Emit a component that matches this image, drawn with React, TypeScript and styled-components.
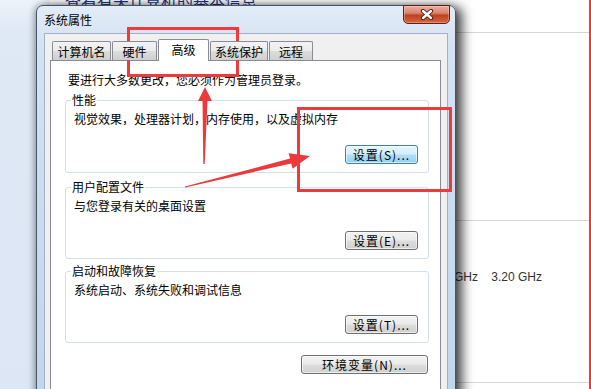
import styled, { createGlobalStyle } from 'styled-components';

const GlobalStyle = createGlobalStyle`
  html, body {
    margin: 0;
    padding: 0;
    background: #fff;
    overflow: hidden;
  }
  body {
    font-family: 'Noto Sans CJK SC', 'Noto Sans', sans-serif;
  }
  * {
    box-sizing: border-box;
  }
`;

const Screen = styled.div`
  position: relative;
  width: 591px;
  height: 389px;
  overflow: hidden;
  display: flex;
  background: #fff;
`;

/* ---- control panel behind the dialog ---- */

const Sidebar = styled.aside`
  width: 50px;
  flex-shrink: 0;
  background: linear-gradient(180deg, #eef3fa 0, #dfe8f5 30px, #dce6f4 100%);
`;

const Main = styled.main`
  flex: 1;
  min-width: 0;
  display: flex;
  flex-direction: column;
`;

const PageHeading = styled.h1`
  margin: -8px 0 0;
  height: 41px;
  padding-left: 15px;
  border-bottom: 1px solid #d6d6d6;
  font-size: 16px;
  line-height: 16px;
  font-weight: normal;
  color: #1e3287;
  white-space: nowrap;
`;

const Section = styled.section<{ $height: number }>`
  height: ${(p) => p.$height}px;
  border-bottom: 1px solid #d6d6d6;
`;

const SpecRow = styled.div`
  margin-top: 49px;
  display: flex;
  justify-content: flex-end;
  padding-right: 49px;
  white-space: nowrap;
  font-family: 'Liberation Sans', Arial, sans-serif;
  font-size: 12px;
  line-height: 14px;
  color: #333;
`;

/* ---- the dialog window ---- */

const Window = styled.div`
  position: absolute;
  left: 36px;
  top: 5px;
  width: 420px;
  height: 400px;
  display: flex;
  flex-direction: column;
  padding: 0 7px;
  border: 1px solid #46566a;
  border-radius: 7px 7px 0 0;
  background: linear-gradient(180deg, #e3ecf7 0, #d4e2f3 40px, #c0d5ee 100%);
  box-shadow: 6px 2px 12px rgba(0, 0, 0, 0.75), -2px 0 6px rgba(0, 0, 0, 0.25);
`;

const TitleBar = styled.div`
  height: 27px;
  display: flex;
  justify-content: space-between;
  align-items: flex-start;
`;

const Title = styled.span`
  font-size: 12px;
  line-height: 27px;
  color: #000;
`;

const CloseButton = styled.div`
  width: 47px;
  height: 19px;
  margin-top: -1px;
  margin-right: -2px;
  display: flex;
  align-items: center;
  justify-content: center;
  border: 1px solid #5a2218;
  border-radius: 0 0 5px 5px;
  background: linear-gradient(180deg, #eab0a2 0%, #d9826c 42%, #c2401f 55%, #d2683f 100%);
  box-shadow: inset 0 0 0 1px rgba(255, 220, 200, 0.35);
`;

const Body = styled.div`
  flex: 1;
  display: flex;
  flex-direction: column;
  padding: 5px 6px 0 5px;
  background: #f0f0f0;
  border: 1px solid #9fb1c8;
  border-bottom: none;
`;

const TabRow = styled.div`
  height: 21px;
  display: flex;
  align-items: flex-end;
  gap: 1px;
  padding-left: 2px;
  position: relative;
  z-index: 1;
`;

const Tab = styled.div<{ $width: number; $active?: boolean }>`
  width: ${(p) => p.$width}px;
  height: ${(p) => (p.$active ? 22 : 19)}px;
  margin-bottom: ${(p) => (p.$active ? -1 : 0)}px;
  display: flex;
  align-items: center;
  justify-content: center;
  padding-bottom: ${(p) => (p.$active ? 3 : 0)}px;
  border: 1px solid #898c95;
  border-bottom: none;
  border-radius: 2px 2px 0 0;
  background: ${(p) =>
    p.$active ? '#fff' : 'linear-gradient(180deg, #f3f3f3 0%, #ebebeb 50%, #dddddd 51%, #cfcfcf 100%)'};
  font-size: 12px;
  color: #000;
  white-space: nowrap;
`;

const Panel = styled.div`
  flex: 1;
  display: flex;
  flex-direction: column;
  align-items: stretch;
  padding: 12px 11px 0 14px;
  border: 1px solid #898c95;
  background: #fff;
`;

const Intro = styled.p`
  margin: 0 0 0 3px;
  font-size: 12px;
  line-height: 14px;
  color: #000;
`;

const Group = styled.fieldset<{ $gap: number }>`
  margin: ${(p) => p.$gap}px 0 0;
  padding: 0 10px 8px 8px;
  border: 1px solid #d5dfe5;
  border-radius: 3px;
  min-inline-size: auto;
`;

const Legend = styled.legend`
  margin-left: -3px;
  padding: 0 1px;
  font-size: 12px;
  line-height: 14px;
  color: #000;
`;

const GroupText = styled.p`
  margin: 4px 0 0;
  font-size: 12px;
  line-height: 16px;
  color: #000;
`;

const ButtonRow = styled.div<{ $gap: number }>`
  margin-top: ${(p) => p.$gap}px;
  display: flex;
  justify-content: flex-end;
`;

const Button = styled.button<{ $width: number; $focused?: boolean }>`
  width: ${(p) => p.$width}px;
  height: 19px;
  padding: 0;
  display: flex;
  align-items: center;
  justify-content: center;
  border: 1px solid ${(p) => (p.$focused ? '#3c7fb1' : '#707070')};
  border-radius: 3px;
  background: ${(p) =>
    p.$focused
      ? 'linear-gradient(180deg, #e6f5fd 0%, #d4eefc 48%, #b0dff8 52%, #93d0f0 100%)'
      : 'linear-gradient(180deg, #f2f2f2 0%, #ebebeb 48%, #dddddd 52%, #cfcfcf 100%)'};
  box-shadow: inset 0 0 0 1px rgba(255, 255, 255, 0.6);
  font-family: 'Noto Sans CJK SC', sans-serif;
  font-size: 12px;
  letter-spacing: 1px;
  color: #000;
`;

/* ---- red annotations drawn over the screenshot ---- */

const Marker = styled.div<{ $x: number; $y: number; $w: number; $h: number }>`
  position: absolute;
  left: ${(p) => p.$x}px;
  top: ${(p) => p.$y}px;
  width: ${(p) => p.$w}px;
  height: ${(p) => p.$h}px;
  border: 3px solid #ec3b3b;
  pointer-events: none;
`;

const EdgeLine = styled.div`
  position: absolute;
  left: 589px;
  top: 0;
  width: 2px;
  height: 100%;
  background: #f03a3a;
`;

const Arrows = styled.svg`
  position: absolute;
  left: 0;
  top: 0;
  pointer-events: none;
`;

function CloseGlyph() {
  return (
    <svg width="14" height="11" viewBox="0 0 14 11">
      <path d="M3 2 L11 9 M11 2 L3 9" stroke="#4a1a10" strokeWidth="4.2" strokeLinecap="round" />
      <path d="M3 2 L11 9 M11 2 L3 9" stroke="#fff" strokeWidth="2.4" strokeLinecap="round" />
    </svg>
  );
}

const tabs = [
  { label: '计算机名', width: 59 },
  { label: '硬件', width: 45 },
  { label: '高级', width: 51, active: true },
  { label: '系统保护', width: 58 },
  { label: '远程', width: 44 },
];

const groups = [
  { title: '性能', text: '视觉效果，处理器计划，内存使用，以及虚拟内存', button: '设置(S)...', focused: true, gap: 6, inner: 18 },
  { title: '用户配置文件', text: '与您登录有关的桌面设置', button: '设置(E)...', gap: 7, inner: 17 },
  { title: '启动和故障恢复', text: '系统启动、系统失败和调试信息', button: '设置(T)...', gap: 5, inner: 17 },
];

export default function App() {
  return (
    <Screen>
      <GlobalStyle />
      <Sidebar />
      <Main>
        <PageHeading>查看有关计算机的基本信息</PageHeading>
        <Section $height={188} />
        <SpecRow>Intel(R) Core(TM) i5-3470 CPU @ 3.20GHz&nbsp;&nbsp;&nbsp;&nbsp;3.20 GHz</SpecRow>
        <Section $height={99} />
      </Main>

      <Window>
        <TitleBar>
          <Title>系统属性</Title>
          <CloseButton>
            <CloseGlyph />
          </CloseButton>
        </TitleBar>
        <Body>
          <TabRow>
            {tabs.map((t) => (
              <Tab key={t.label} $width={t.width} $active={t.active}>
                {t.label}
              </Tab>
            ))}
          </TabRow>
          <Panel>
            <Intro>要进行大多数更改，您必须作为管理员登录。</Intro>
            {groups.map((g) => (
              <Group key={g.title} $gap={g.gap}>
                <Legend>{g.title}</Legend>
                <GroupText>{g.text}</GroupText>
                <ButtonRow $gap={g.inner}>
                  <Button $width={73} $focused={g.focused}>
                    {g.button}
                  </Button>
                </ButtonRow>
              </Group>
            ))}
            <ButtonRow $gap={12}>
              <Button $width={127} style={{ marginRight: 1 }}>
                环境变量(N)...
              </Button>
            </ButtonRow>
          </Panel>
        </Body>
      </Window>

      <Marker $x={127} $y={27} $w={112} $h={50} />
      <Marker $x={297} $y={107} $w={155} $h={85} />
      <EdgeLine />
      <Arrows width="591" height="389" viewBox="0 0 591 389">
        <polygon
          points="203.3,164 202.5,101 198,101 205,87 212,101 207.5,101 204.7,164"
          fill="#ea3a3b"
        />
        <polygon
          points="184.9,186.5 290,158.6 288.6,153.2 310,156 292.6,168.7 291.2,163.4 185.1,187.5"
          fill="#ea3a3b"
        />
      </Arrows>
    </Screen>
  );
}
